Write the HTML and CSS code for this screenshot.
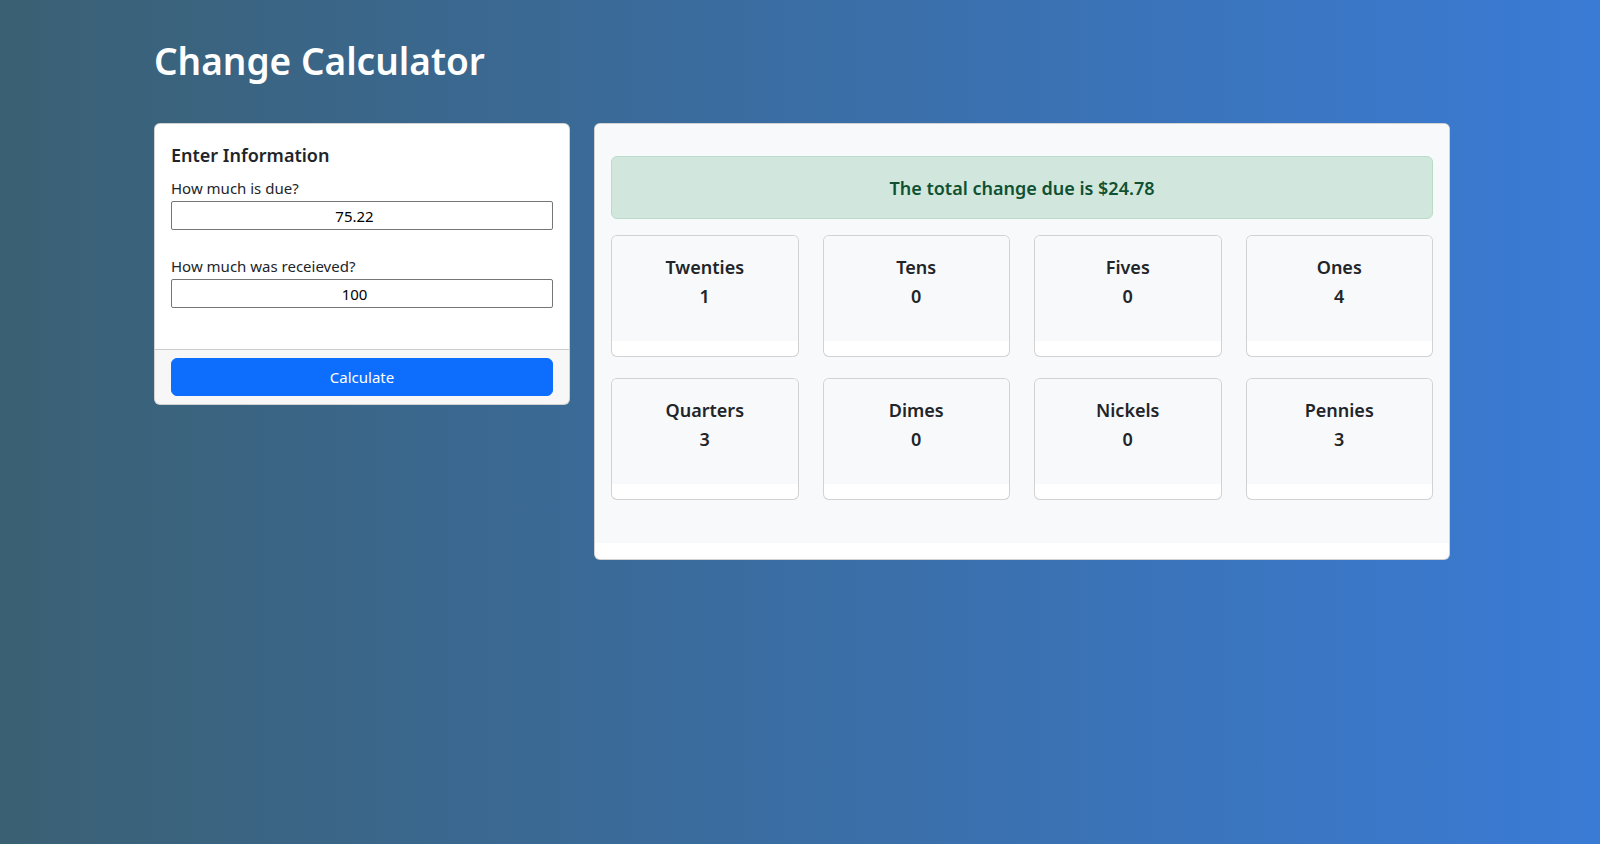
FILE: index.html
```html
<!DOCTYPE html>
<html lang="en">
<head>
<meta charset="utf-8">
<title>Change Calculator</title>
<link rel="stylesheet" href="styles.css">
</head>
<body>
<div class="container">
  <header class="page-header">
    <h1 class="page-title">Change Calculator</h1>
  </header>
  <main class="layout">
    <section class="card input-card">
      <div class="card-body">
        <h5 class="card-title">Enter Information</h5>
        <div class="form-group">
          <label class="form-label" for="amountDue">How much is due?</label>
          <input class="form-input" id="amountDue" type="number" value="75.22">
        </div>
        <div class="form-group">
          <label class="form-label" for="amountReceived">How much was receieved?</label>
          <input class="form-input" id="amountReceived" type="number" value="100">
        </div>
      </div>
      <div class="card-footer">
        <button class="btn-primary" type="button">Calculate</button>
      </div>
    </section>
    <section class="card result-card">
      <div class="result-body">
        <div class="alert-success">
          <h5 class="alert-text">The total change due is $24.78</h5>
        </div>
        <div class="denoms">
          <div class="denom-card"><div class="denom-body"><h5 class="denom-name">Twenties</h5><h5 class="denom-count">1</h5></div></div>
          <div class="denom-card"><div class="denom-body"><h5 class="denom-name">Tens</h5><h5 class="denom-count">0</h5></div></div>
          <div class="denom-card"><div class="denom-body"><h5 class="denom-name">Fives</h5><h5 class="denom-count">0</h5></div></div>
          <div class="denom-card"><div class="denom-body"><h5 class="denom-name">Ones</h5><h5 class="denom-count">4</h5></div></div>
          <div class="denom-card"><div class="denom-body"><h5 class="denom-name">Quarters</h5><h5 class="denom-count">3</h5></div></div>
          <div class="denom-card"><div class="denom-body"><h5 class="denom-name">Dimes</h5><h5 class="denom-count">0</h5></div></div>
          <div class="denom-card"><div class="denom-body"><h5 class="denom-name">Nickels</h5><h5 class="denom-count">0</h5></div></div>
          <div class="denom-card"><div class="denom-body"><h5 class="denom-name">Pennies</h5><h5 class="denom-count">3</h5></div></div>
        </div>
      </div>
    </section>
  </main>
</div>
</body>
</html>
```
FILE: styles.css
```css
* {
  box-sizing: border-box;
}

html {
  min-height: 100%;
  background: linear-gradient(to right, #3a6073, #3a7bd5);
}

body {
  margin: 0;
  min-height: 100vh;
  font-family: "Noto Sans", "Open Sans", sans-serif;
  font-size: 16px;
  line-height: 24px;
  color: #212529;
}

.container {
  width: 1300px;
  margin: 0 auto;
  padding-left: 4px;
}

.page-header {
  padding-top: 37px;
}

.page-title {
  margin: 0;
  font-size: 37px;
  line-height: 48px;
  font-weight: 600;
  color: #ffffff;
}

.layout {
  display: grid;
  grid-template-columns: 416px 856px;
  column-gap: 24px;
  align-items: start;
  margin-top: 38px;
}

.card {
  background: #ffffff;
  border: 1px solid rgba(0, 0, 0, 0.175);
  border-radius: 6px;
  overflow: hidden;
}

.card-body {
  padding: 19px 16px 17px;
}

.card-title {
  margin: 0 0 9px;
  font-size: 18px;
  line-height: 24px;
  font-weight: 600;
}

.form-group {
  margin-bottom: 24px;
}

.form-label {
  display: block;
  margin-bottom: 1px;
  font-size: 15px;
  line-height: 24px;
  font-weight: 400;
}

.form-input {
  display: block;
  width: 100%;
  height: 29px;
  padding: 1px 2px;
  border: 1px solid #767676;
  border-radius: 2px;
  font-family: inherit;
  font-size: 15px;
  line-height: 24px;
  color: #000000;
  text-align: center;
  background: #ffffff;
}

.card-footer {
  padding: 8px 16px;
  background: rgba(0, 0, 0, 0.03);
  border-top: 1px solid rgba(0, 0, 0, 0.175);
}

.btn-primary {
  display: block;
  width: 100%;
  height: 38px;
  border: 1px solid #0d6efd;
  border-radius: 6px;
  background: #0d6efd;
  color: #ffffff;
  font-family: inherit;
  font-size: 15px;
  line-height: 24px;
}

.result-body {
  background: #f8f9fa;
  padding: 32px 16px 43px;
  margin-bottom: 16px;
}

.alert-success {
  padding: 19px 16px 18px;
  background: #d1e7dd;
  border: 1px solid #badbcc;
  border-radius: 6px;
  color: #0f5132;
  text-align: center;
}

.alert-text {
  margin: 0;
  font-size: 18px;
  line-height: 24px;
  font-weight: 600;
}

.denoms {
  display: grid;
  grid-template-columns: repeat(4, 1fr);
  column-gap: 24px;
  row-gap: 21px;
  margin-top: 16px;
}

.denom-card {
  background: #ffffff;
  border: 1px solid rgba(0, 0, 0, 0.175);
  border-radius: 6px;
  overflow: hidden;
}

.denom-body {
  background: #f8f9fa;
  padding: 19px 16px 33px;
  margin-bottom: 15px;
  text-align: center;
}

.denom-name,
.denom-count {
  margin: 0;
  font-size: 18px;
  line-height: 24px;
  font-weight: 600;
}

.denom-count {
  margin-top: 5px;
}
```
